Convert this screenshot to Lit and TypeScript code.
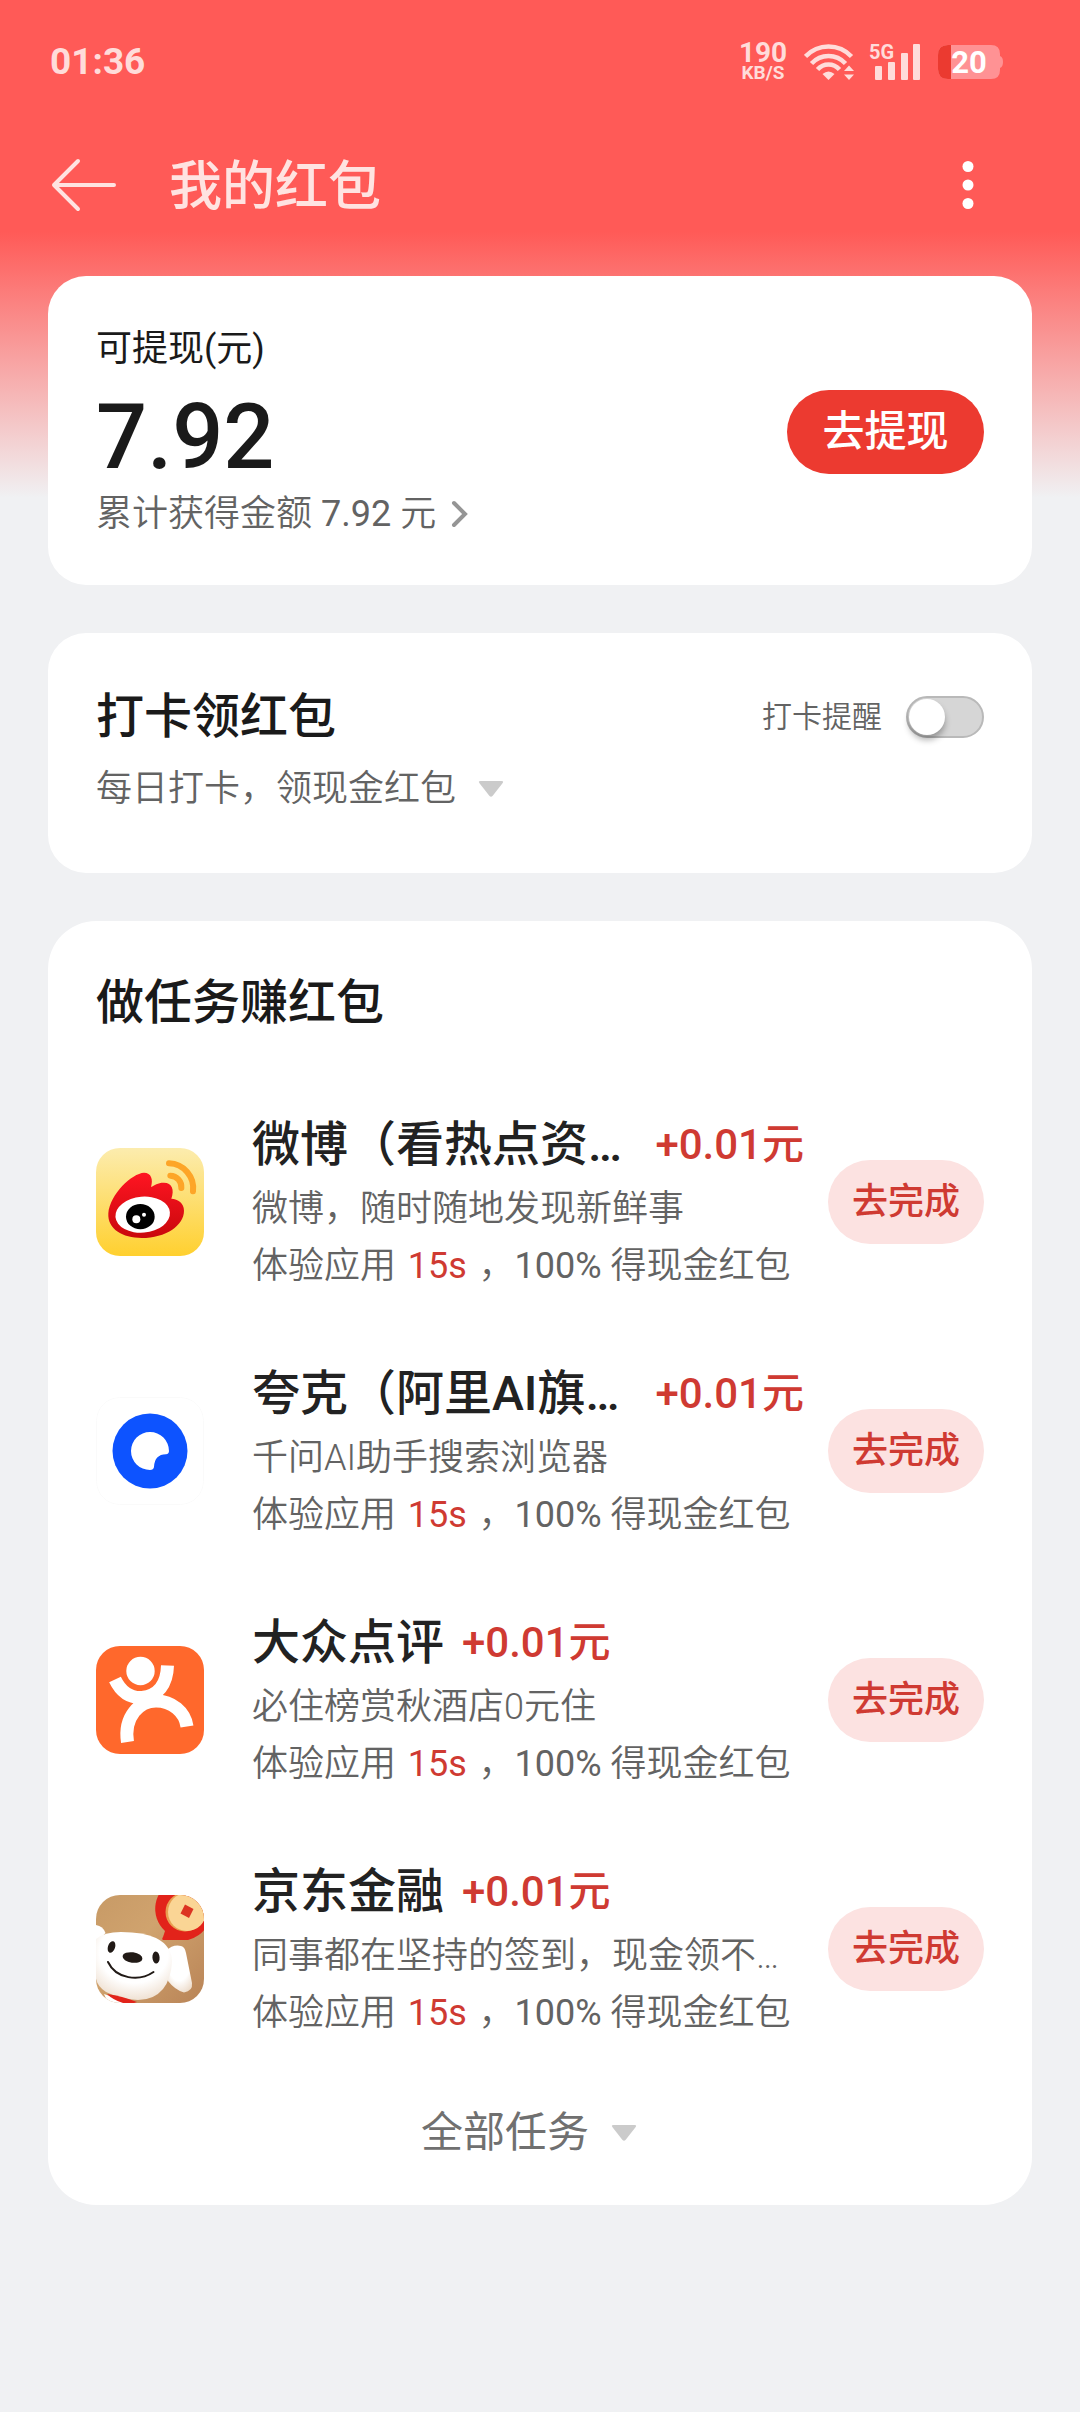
import { LitElement, html, svg, css, nothing } from "lit";
import { customElement, property, state } from "lit/decorators.js";

interface Task {
  icon: string;
  name: string;
  reward: string;
  note: string;
}

const TASKS: Task[] = [
  { icon: "weibo", name: "微博（看热点资…", reward: "+0.01元", note: "微博，随时随地发现新鲜事" },
  { icon: "quark", name: "夸克（阿里AI旗…", reward: "+0.01元", note: "千问AI助手搜索浏览器" },
  { icon: "dianping", name: "大众点评", reward: "+0.01元", note: "必住榜赏秋酒店0元住" },
  { icon: "jd", name: "京东金融", reward: "+0.01元", note: "同事都在坚持的签到，现金领不…" },
];

const triangle = html`<svg class="triangle" width="26" height="16" viewBox="0 0 26 16" aria-hidden="true">
  <path d="M2.500 0h21q2.500 0 1.200 2L14.500 15q-1.500 1.600-3 0L1.300 2Q0 0 2.500 0z" fill="#cbcbcb" />
</svg>`;

const logos: Record<string, unknown> = {
  weibo: svg`
    <defs>
      <linearGradient id="sun" x1="0" y1="0" x2="0" y2="1">
        <stop offset="0" stop-color="#fcecae" /><stop offset="1" stop-color="#ffd02f" />
      </linearGradient>
      <linearGradient id="flame" x1="0" y1="0" x2="0" y2="1">
        <stop offset="0" stop-color="#ff1522" /><stop offset="1" stop-color="#c9080c" />
      </linearGradient>
    </defs>
    <rect width="108" height="108" fill="url(#sun)" />
    <g transform="scale(.33333)">
      <path fill="url(#flame)" d="M165 117C172 95 166 74 144 74C108 76 42 138 37 196C34 244 80 270 137 270C210 270 264 232 264 188C264 165 246 153 226 152C236 125 228 103 202 104C186 104 175 112 165 117Z" />
      <ellipse cx="140" cy="200" rx="82" ry="54" fill="#fff" transform="rotate(-5 140 200)" />
      <ellipse cx="133" cy="206" rx="43" ry="38" fill="#000" />
      <circle cx="121" cy="214" r="12" fill="#fff" />
      <circle cx="144" cy="200" r="6" fill="#fff" />
      <g fill="none" stroke="#fda528" stroke-width="18" stroke-linecap="round">
        <path d="M219 46A75 75 0 0 1 291 130" />
        <path d="M223 83A34 34 0 0 1 256 120" />
      </g>
    </g>`,
  quark: svg`
    <rect x="0.500" y="0.500" width="107" height="107" rx="23" fill="#fff" stroke="#fafafa" />
    <circle cx="54" cy="54" r="37.500" fill="#0d53ff" />
    <path fill="#fff" d="M73 54Q73 57 70 57.300Q58.500 57.500 58 70Q57.500 73 54 73A19 19 0 1 1 73 54Z" />`,
  dianping: svg`
    <rect width="108" height="108" fill="#ff682c" />
    <circle cx="44.500" cy="25" r="14.200" fill="#fff" />
    <g fill="none" stroke="#fff" stroke-width="13">
      <path d="M19 33.500C26 48 36 52 46 51.500C62 50 71 38 71.500 19.500" />
      <path d="M31.500 96C27.500 70 44 55 60 55C76 55 89 66 91 80.500" />
    </g>
    <path fill="#fff" d="M37 57L46 50L67 49.500L60 60L44 62Z" />`,
  jd: svg`
    <defs>
      <linearGradient id="tan" x1="0" y1="0" x2="1" y2="1">
        <stop offset="0" stop-color="#c79a66" /><stop offset=".4" stop-color="#d0a36e" /><stop offset="1" stop-color="#b98457" />
      </linearGradient>
      <radialGradient id="fur" cx=".5" cy=".3" r=".75">
        <stop offset=".6" stop-color="#fff" /><stop offset="1" stop-color="#eddccb" />
      </radialGradient>
    </defs>
    <rect width="108" height="108" fill="url(#tan)" />
    <path fill="#e2231a" d="M78-14A30 30 0 1 1 92 45L67 45Q65.500 44 67 42L69 36A30 30 0 0 1 78-14Z" />
    <circle cx="89" cy="17" r="19.500" fill="#e8a052" />
    <circle cx="91" cy="17" r="19" fill="#fad595" />
    <path fill="#dc3322" d="M89 9.500L97.500 14L93 23L84.500 18.500Z" />
    <path fill="#fff" d="M0 30Q7 31 9.500 38L0 48Z" />
    <path fill="url(#fur)" d="M70 56Q77 49 85 51Q89 52 90 58L96 88Q97 96 88 97.500Q79 95 72 86Z" />
    <path fill="url(#fur)" d="M0 44Q8 37 25 37Q48 37 60 43Q76 51 76 67Q75 84 67 94Q58 105 42 105Q24 104 10 97Q2 92 0 84Z" />
    <path fill="#fff" d="M8 99L34 108H12Z" />
    <path fill="#e2231a" d="M11 99Q26 101 41 107L38 108H27Q17 105 11 99Z" />
    <g fill="#211a16">
      <ellipse cx="15.500" cy="52" rx="3.600" ry="6" transform="rotate(18 15.500 52)" />
      <ellipse cx="60" cy="62.500" rx="3.600" ry="6" transform="rotate(-4 60 62.500)" />
      <ellipse cx="36.500" cy="62.500" rx="10" ry="5.200" transform="rotate(8 36.500 62.500)" />
    </g>
    <path d="M12 67C20 84 43 87 57.500 77" fill="none" stroke="#211a16" stroke-width="2" stroke-linecap="round" />`,
};

const base = css`
  * {
    box-sizing: border-box;
  }
  button {
    border: 0;
    background: none;
    padding: 0;
    margin: 0;
    font: inherit;
    color: inherit;
    cursor: pointer;
  }
  svg {
    display: block;
    flex: none;
  }
  h1, h2, h3, p {
    margin: 0;
    font-weight: 500;
  }
`;

@customElement("status-bar")
class StatusBar extends LitElement {
  static styles = [
    base,
    css`
      :host {
        display: flex;
        align-items: center;
        justify-content: space-between;
        height: 124px;
        padding: 0 76px 0 50px;
        color: #ffdcda;
        font-weight: 700;
      }
      .time {
        font-size: 37px;
        line-height: 48px;
      }
      .icons {
        display: flex;
        align-items: center;
        gap: 15px;
      }
      .speed {
        display: flex;
        flex-direction: column;
        align-items: center;
        width: 52px;
      }
      .rate {
        font-size: 28px;
        line-height: 22px;
      }
      .unit {
        font-size: 19px;
        line-height: 18px;
      }
    `,
  ];

  render() {
    return html`
      <span class="time">01:36</span>
      <div class="icons">
        <div class="speed"><span class="rate">190</span><span class="unit">KB/S</span></div>
        <svg width="50" height="38" viewBox="0 0 50 38" role="img" aria-label="Wi-Fi">
          <g fill="none" stroke="currentColor" stroke-width="4.500">
            <path d="M1.500 13.500Q11 3.500 24.500 3.500T47.500 13.500" />
            <path d="M7.500 20.500Q14.500 13 24.500 13T41.500 20.500" />
            <path d="M13.500 26.500Q18 21.500 24.500 21.500T35.500 26.500" />
          </g>
          <path d="M18.500 31Q24.500 26 30.500 31L24.500 37Z" fill="currentColor" />
          <path d="M40 28L45 22.500L50 28ZM40 31.500H50L45 37Z" fill="currentColor" />
        </svg>
        <svg width="54" height="46" viewBox="0 -4 54 46" fill="currentColor" role="img" aria-label="5G">
          <text x="0" y="16" font-size="20">5G</text>
          <rect x="6" y="23" width="7" height="14" rx="1" />
          <rect x="19" y="19" width="7" height="18" rx="1" />
          <rect x="32" y="10" width="7" height="27" rx="1" />
          <rect x="44" y="1" width="7" height="36" rx="1" />
        </svg>
        <svg width="66" height="42" viewBox="0 -4 66 42">
          <path fill="#ff9294" d="M10 0H53Q62 0 62 9V11Q65 12 65 17T62 23V25Q62 34 53 34H10Q0 34 0 24V10Q0 0 10 0Z" />
          <path fill="#eb3a30" d="M10 0H13V34H10Q0 34 0 24V10Q0 0 10 0Z" />
          <text x="31" y="28" font-size="31" fill="#fff" text-anchor="middle">20</text>
        </svg>
      </div>
    `;
  }
}

@customElement("app-icon")
class AppIcon extends LitElement {
  @property() name = "";

  static styles = [
    base,
    css`
      :host {
        display: block;
        flex: none;
        border-radius: 24px;
        overflow: hidden;
      }
    `,
  ];

  render() {
    return html`<svg width="108" height="108" viewBox="0 0 108 108" aria-hidden="true">
      ${logos[this.name] ?? nothing}
    </svg>`;
  }
}

@customElement("task-item")
class TaskItem extends LitElement {
  @property({ attribute: false }) task!: Task;

  static styles = [
    base,
    css`
      :host {
        display: flex;
        align-items: center;
        height: 249px;
      }
      .body {
        flex: 1;
        min-width: 0;
        padding: 0 24px 0 48px;
        white-space: nowrap;
      }
      .head {
        display: flex;
        gap: 18px;
        line-height: 72px;
      }
      .long {
        justify-content: space-between;
      }
      .name {
        font-size: 48px;
        color: #222;
      }
      .reward {
        font-size: 42px;
        font-weight: 500;
        color: #cf3a32;
      }
      .line {
        font-size: 36px;
        line-height: 57px;
        font-weight: 350;
        color: #636363;
      }
      .secs {
        padding: 0 3px;
        font-weight: 400;
        color: #cf3a32;
      }
      .share {
        font-weight: 400;
      }
      .go {
        flex: none;
        width: 156px;
        height: 84px;
        border-radius: 42px;
        background: #fce2e1;
        color: #cf3a32;
        font-size: 36px;
        font-weight: 500;
        line-height: 48px;
      }
    `,
  ];

  render() {
    const { icon, name, reward, note } = this.task;
    return html`
      <app-icon name=${icon}></app-icon>
      <div class="body">
        <div class="head ${name.endsWith("…") ? "long" : ""}">
          <h3 class="name">${name}</h3>
          <span class="reward">${reward}</span>
        </div>
        <p class="line">${note}</p>
        <p class="line">体验应用 <span class="secs">15s</span> ，<span class="share">100%</span> 得现金红包</p>
      </div>
      <button class="go" type="button">去完成</button>
    `;
  }
}

@customElement("app-root")
class AppRoot extends LitElement {
  @state() private remind = false;

  static styles = [
    base,
    css`
      :host {
        display: block;
        min-height: 100vh;
        padding-bottom: 48px;
        background: linear-gradient(#ff5a57 0, #ff5a57 232px, #f0f1f3 498px) #f0f1f3;
        color: #1a1a1a;
        font-family: Roboto, "Noto Sans CJK SC", sans-serif;
      }
      .bar {
        display: flex;
        align-items: center;
        height: 122px;
        padding: 0 82px 0 50px;
        color: #ffe3e1;
      }
      .title {
        flex: 1;
        padding: 4px 0 0 49px;
        font-size: 53px;
        line-height: 72px;
      }
      main {
        display: flex;
        flex-direction: column;
        gap: 48px;
        padding: 30px 48px 0;
      }
      .card {
        padding: 48px;
        border-radius: 38px;
        background: #fff;
      }
      .balance {
        display: flex;
        align-items: center;
        justify-content: space-between;
        padding: 49px 48px 47px;
      }
      .label {
        font-size: 36px;
        font-weight: 400;
        line-height: 48px;
      }
      .amount {
        padding-top: 12px;
        font-size: 90px;
        line-height: 105px;
      }
      .sub {
        display: flex;
        align-items: center;
        font-size: 36px;
        font-weight: 350;
        line-height: 48px;
        color: #636363;
        text-decoration: none;
      }
      .total {
        gap: 15px;
      }
      .sum {
        padding: 0 9px;
        font-weight: 400;
      }
      .total .text {
        display: flex;
      }
      .withdraw {
        width: 197px;
        height: 84px;
        border-radius: 42px;
        background: #ec3a30;
        color: #fff;
        font-size: 42px;
        font-weight: 500;
        line-height: 48px;
      }
      .checkin {
        padding: 52px 48px 60px;
      }
      .row {
        display: flex;
        align-items: center;
        justify-content: space-between;
        margin-bottom: 16px;
      }
      .heading {
        font-size: 48px;
        line-height: 64px;
      }
      .remind {
        display: flex;
        align-items: center;
        gap: 24px;
        font-size: 30px;
        font-weight: 350;
        line-height: 42px;
        color: #636363;
      }
      .switch {
        appearance: none;
        display: flex;
        width: 78px;
        height: 42px;
        margin: 0;
        padding: 1px;
        border: 2px solid #b9b9b9;
        border-radius: 21px;
        background: #d6d6d6;
      }
      .switch::before {
        content: "";
        width: 36px;
        height: 36px;
        border-radius: 50%;
        background: #fff;
        box-shadow: 0 5px 6px rgba(0, 0, 0, 0.3);
      }
      .switch:checked {
        justify-content: flex-end;
        background: #ec3a30;
      }
      .expand {
        gap: 22px;
      }
      .tasks {
        padding: 50px 48px 42px;
        border-radius: 48px;
      }
      .list {
        margin: 42px 0 30px;
      }
      .all {
        display: flex;
        align-items: center;
        gap: 22px;
        margin: 0 auto;
        padding-right: 22px;
        font-size: 42px;
        line-height: 60px;
        color: #707070;
      }
    `,
  ];

  render() {
    return html`
      <status-bar></status-bar>
      <header class="bar">
        <button type="button" aria-label="返回">
          <svg width="70" height="56" viewBox="0 0 70 56" fill="none" stroke="currentColor" stroke-width="4" stroke-linecap="round" stroke-linejoin="round">
            <path d="M28 4L4 28L28 52M4 28H64" />
          </svg>
        </button>
        <h1 class="title">我的红包</h1>
        <button type="button" aria-label="更多">
          <svg width="60" height="60" viewBox="0 0 60 60" fill="#fff">
            <circle cx="30" cy="11.500" r="5.500" />
            <circle cx="30" cy="30" r="5.500" />
            <circle cx="30" cy="48.500" r="5.500" />
          </svg>
        </button>
      </header>
      <main>
        <section class="card balance">
          <div>
            <p class="label">可提现(元)</p>
            <p class="amount">7.92</p>
            <a class="sub total" href="#records">
              <span class="text">累计获得金额<span class="sum">7.92</span>元</span>
              <svg width="18" height="28" viewBox="0 0 18 28" fill="none" stroke="#959595" stroke-width="4" stroke-linecap="round">
                <path d="M3 3L14 14L3 25" />
              </svg>
            </a>
          </div>
          <button class="withdraw" type="button">去提现</button>
        </section>

        <section class="card checkin">
          <div class="row">
            <h2 class="heading">打卡领红包</h2>
            <label class="remind">
              打卡提醒
              <input
                class="switch"
                type="checkbox"
                .checked=${this.remind}
                @change=${(e: Event) => (this.remind = (e.target as HTMLInputElement).checked)}
              />
            </label>
          </div>
          <button class="sub expand" type="button">每日打卡，领现金红包 ${triangle}</button>
        </section>

        <section class="card tasks">
          <h2 class="heading">做任务赚红包</h2>
          <div class="list">${TASKS.map((t) => html`<task-item .task=${t}></task-item>`)}</div>
          <button class="all" type="button">全部任务 ${triangle}</button>
        </section>
      </main>
    `;
  }
}
